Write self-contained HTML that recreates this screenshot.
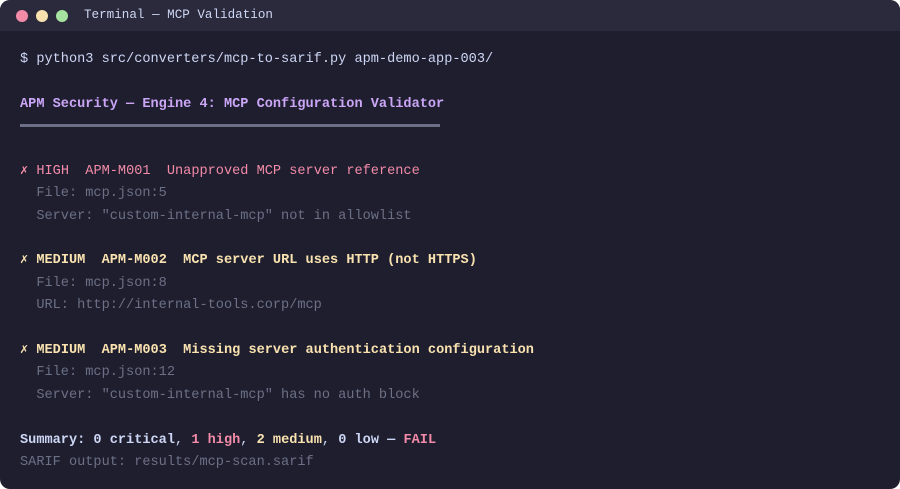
<!DOCTYPE html>
<html><head><meta charset="utf-8"><style>
html,body{margin:0;padding:0;background:#fff;width:900px;height:489px;overflow:hidden}
.win{width:900px;height:489px;background:#1e1e2e;border-radius:10px;overflow:hidden;position:relative}
.bar{height:31px;background:#2a2a3c;position:relative}
.dot{width:12px;height:12px;border-radius:50%;position:absolute;top:10px}
.t{position:absolute;left:84px;top:8px;font:12.6px "Liberation Mono",monospace;color:#cdd6f4}
.body{position:absolute;left:20px;top:48.8px;font:13.6px/22.4px "Liberation Mono","DejaVu Sans Mono",monospace;color:#cdd6f4;white-space:pre}
.b{font-weight:bold}.r{color:#f38ba8}.y{color:#f9e2af}.g{color:#6c7086}.p{color:#cba6f7}
.rule{display:inline-block;width:420px;height:3px;background:#6c7086;vertical-align:middle}
</style></head><body><div class="win">
<div class="bar"><div class="dot" style="left:16px;background:#f38ba8"></div><div class="dot" style="left:36px;background:#f9e2af"></div><div class="dot" style="left:56px;background:#a6e3a1"></div><div class="t">Terminal — MCP Validation</div></div>
<div class="body">$ python3 src/converters/mcp-to-sarif.py apm-demo-app-003/

<span class="b p">APM Security — Engine 4: MCP Configuration Validator</span>
<span class="rule"></span>

<span class="r">✗ HIGH  APM-M001  Unapproved MCP server reference</span>
<span class="g">  File: mcp.json:5</span>
<span class="g">  Server: "custom-internal-mcp" not in allowlist</span>

<span class="y">✗ <b>MEDIUM  APM-M002  MCP server URL uses HTTP (not HTTPS)</b></span>
<span class="g">  File: mcp.json:8</span>
<span class="g">  URL: http://internal-tools.corp/mcp</span>

<span class="y">✗ <b>MEDIUM  APM-M003  Missing server authentication configuration</b></span>
<span class="g">  File: mcp.json:12</span>
<span class="g">  Server: "custom-internal-mcp" has no auth block</span>

<b>Summary: 0 critical</b>, <b class="r">1 high</b>, <b class="y">2 medium</b>, <b>0 low — </b><b class="r">FAIL</b>
<span class="g">SARIF output: results/mcp-scan.sarif</span></div>
</div></body></html>
